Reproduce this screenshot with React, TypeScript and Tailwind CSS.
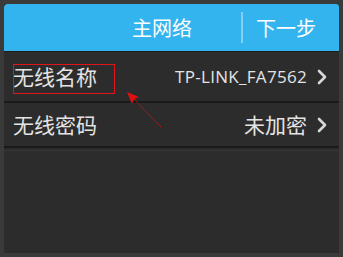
import React from "react"

const cjk = { fontFamily: '"Noto Sans CJK SC", "Noto Sans", sans-serif' }
const latin = { fontFamily: '"Open Sans", "Noto Sans CJK SC", sans-serif' }

function Chevron() {
  return (
    <svg width="12" height="18" viewBox="0 0 12 18" className="ml-[9px]">
      <path d="M3 3 L9 9 L3 15" fill="none" stroke="#d8d8d8" strokeWidth="2.6" strokeLinecap="round" strokeLinejoin="round" />
    </svg>
  )
}

export default function App() {
  return (
    <div className="relative w-[343px] h-[257px] bg-[#3a3a3a] pt-[4px] pl-[4px] pr-[4px] pb-[4px] overflow-hidden">
      <div className="flex flex-col h-full bg-[#2c2c2c]">
        <header className="flex items-center h-[47px] bg-[#34b4ef] rounded-tl-[4px] rounded-tr-[3px] text-white text-[20px]" style={cjk}>
          <div className="flex-1 pl-[128px]">主网络</div>
          <div className="w-[2px] h-[31px] bg-[#86cff2]" />
          <div className="w-[96px] pl-[13px]">下一步</div>
        </header>
        <div className="h-[1px] bg-[#1c1c1c]" />
        <div className="flex items-center h-[49px] pl-[9px] pr-[11px] text-[#e4e4e4]">
          <span className="text-[21px]" style={cjk}>无线名称</span>
          <span className="ml-auto text-[17px] tracking-[0.3px]" style={latin}>TP-LINK_FA7562</span>
          <Chevron />
        </div>
        <div className="h-[2px] bg-[#1a1a1a]" />
        <div className="flex items-center h-[43px] pl-[9px] pr-[11px] text-[#e4e4e4]">
          <span className="text-[21px]" style={cjk}>无线密码</span>
          <span className="ml-auto text-[21px]" style={cjk}>未加密</span>
          <Chevron />
        </div>
        <div className="h-[2px] bg-[#1a1a1a]" />
        <div className="h-[1px] mt-[2px] bg-[#363636]" />
        <div className="flex-1" />
      </div>
      <div className="absolute left-[13px] top-[64px] w-[102px] h-[30px] border border-[#e0141a]" />
      <svg className="absolute left-0 top-0" width="343" height="257">
        <line x1="161" y1="127" x2="134" y2="99" stroke="#e01010" strokeWidth="1" strokeDasharray="1.5 1" />
        <path d="M127 92 L139 97 L134 99 L132 104 Z" fill="#e01010" />
      </svg>
    </div>
  )
}
